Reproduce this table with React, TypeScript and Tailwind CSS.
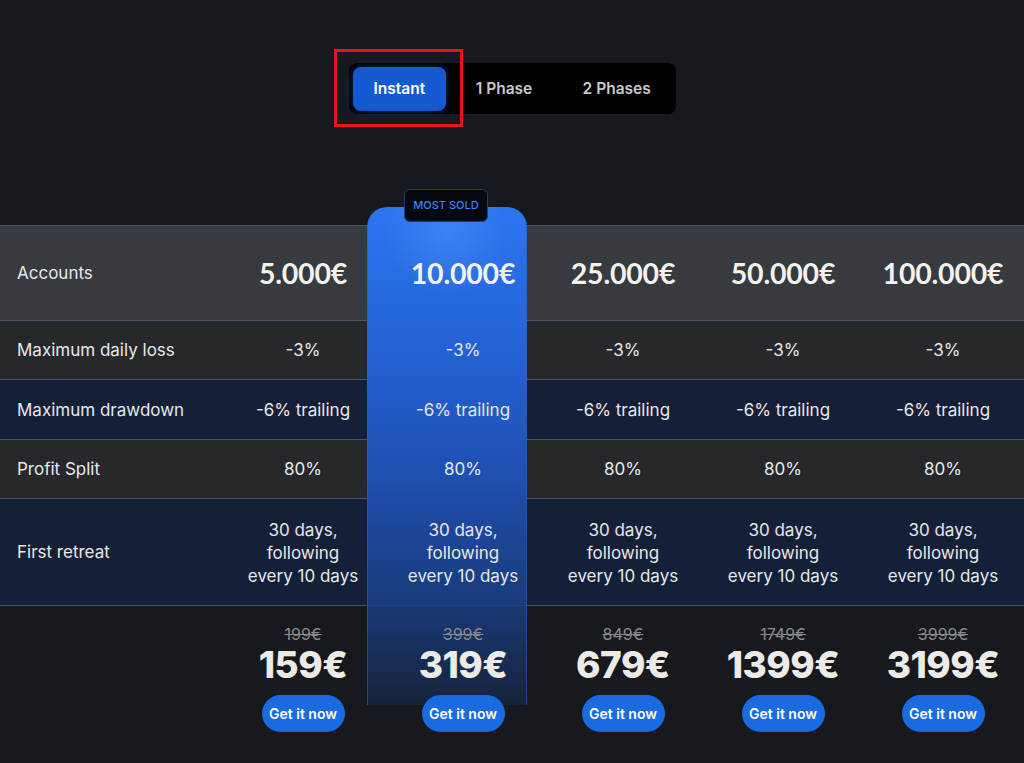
import React from 'react';

const plans = [
  { amount: '5.000€', old: '199€', price: '159€' },
  { amount: '10.000€', old: '399€', price: '319€' },
  { amount: '25.000€', old: '849€', price: '679€' },
  { amount: '50.000€', old: '1749€', price: '1399€' },
  { amount: '100.000€', old: '3999€', price: '3199€' },
];

const rows = [
  { label: 'Maximum daily loss', value: '-3%', bg: 'bg-[#27282b]', h: 'h-[59px]' },
  { label: 'Maximum drawdown', value: '-6% trailing', bg: 'bg-[#152038]', h: 'h-[60px]' },
  { label: 'Profit Split', value: '80%', bg: 'bg-[#27282b]', h: 'h-[59px]' },
];

const Cell: React.FC<{ children: React.ReactNode }> = ({ children }) => (
  <div className="w-[160px] flex items-center justify-center text-center relative z-[2]">{children}</div>
);

const App: React.FC = () => {
  return (
    <div className="min-h-screen bg-[#17191e] pt-[63px] text-[#e8e8e8] font-['Inter',sans-serif] overflow-hidden">
      {/* plan type toggle */}
      <div className="flex justify-center relative">
        <div className="flex items-center w-[327px] h-[51px] bg-black rounded-lg px-[4px]">
          <button className="w-[94px] h-[44px] rounded-lg bg-[#1559d0] text-white text-[15.5px] font-semibold shadow-[0_0_8px_rgba(21,89,208,0.45)]">
            Instant
          </button>
          <button className="w-[116px] h-[44px] text-[#c9c9c9] text-[15.5px] font-semibold">1 Phase</button>
          <button className="w-[110px] h-[44px] text-[#c9c9c9] text-[15.5px] font-semibold">2 Phases</button>
        </div>
        {/* annotation box */}
        <div className="absolute left-[334px] top-[-14px] w-[129px] h-[78px] border-[3px] border-[#e3141b]" />
      </div>

      <div className="relative mt-[111px]">
        {/* highlighted column */}
        <div className="absolute left-[367px] top-[-18px] w-[160px] h-[498px] rounded-t-[20px] z-[1] pointer-events-none bg-[linear-gradient(to_bottom,#2b76f0_0%,#2461d2_30%,#1e4fae_55%,rgba(26,64,135,0.9)_78%,rgba(22,48,95,0.45)_100%)] border-x border-[#2b5fb8]/60" />
        <div className="absolute left-[367px] top-[-18px] w-[160px] h-[90px] rounded-t-[20px] z-[1] pointer-events-none bg-[radial-gradient(circle_at_50%_30%,rgba(80,150,255,0.45),transparent_60%)]" />
        <div className="absolute left-[404px] top-[-36px] w-[84px] h-[33px] z-[3] flex items-center justify-center bg-[#05080f] border border-[#1f3a6e] rounded-md text-[#3b82f6] text-[11px] font-medium">
          MOST SOLD
        </div>

        {/* accounts row */}
        <div className="flex h-[96px] bg-[#373a3f] border-y border-[#4b5263]">
          <div className="w-[223px] pl-[17px] flex items-center text-[17px] pt-[2px]">Accounts</div>
          {plans.map(p => (
            <Cell key={p.amount}>
              <span className="font-['Lato',sans-serif] font-bold text-[28.5px] text-[#f4f2ec] tracking-[-0.2px]">{p.amount}</span>
            </Cell>
          ))}
        </div>

        {rows.map(r => (
          <div key={r.label} className={`flex ${r.h} ${r.bg} border-b border-[#4b5263]`}>
            <div className="w-[223px] pl-[17px] flex items-center text-[17px] pt-[2px]">{r.label}</div>
            {plans.map(p => (
              <Cell key={p.amount}>
                <span className="text-[17px] pt-[2px]">{r.value}</span>
              </Cell>
            ))}
          </div>
        ))}

        <div className="flex h-[107px] bg-[#152038] border-b border-[#4b5263]">
          <div className="w-[223px] pl-[17px] flex items-center text-[17px] pt-[2px]">First retreat</div>
          {plans.map(p => (
            <Cell key={p.amount}>
              <span className="text-[17px] leading-[23px] pt-[2px]">
                30 days,
                <br />
                following
                <br />
                every 10 days
              </span>
            </Cell>
          ))}
        </div>

        {/* prices */}
        <div className="flex pt-[17px] pb-[32px]">
          <div className="w-[223px]" />
          {plans.map(p => (
            <div key={p.amount} className="w-[160px] flex flex-col items-center relative z-[2]">
              <span className="text-[16px] text-[#8b8b8b] line-through leading-[22px]">{p.old}</span>
              <span className="text-[37px] font-extrabold text-[#ecebe6] leading-[40px] tracking-[-0.5px]">{p.price}</span>
              <button className="mt-[10px] w-[83px] h-[37px] rounded-full bg-[#1a6be0] text-white text-[14px] font-semibold">
                Get it now
              </button>
            </div>
          ))}
        </div>
      </div>
    </div>
  );
};

export default App;
